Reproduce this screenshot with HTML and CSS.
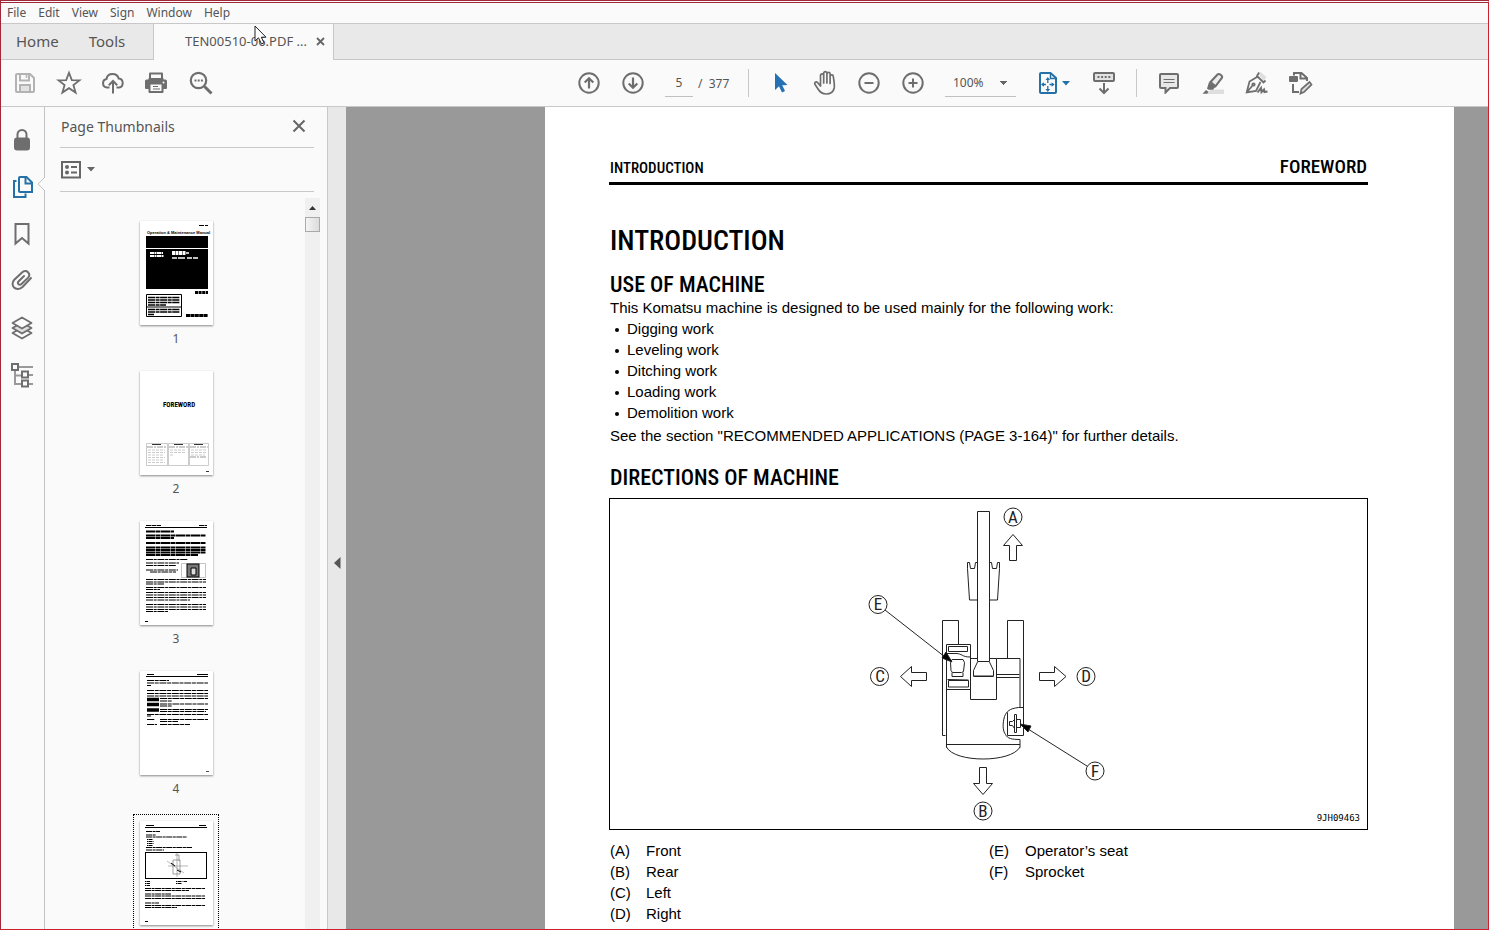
FILE: index.html
```html
<!DOCTYPE html>
<html lang="en">
<head>
<meta charset="utf-8">
<title>TEN00510-06.PDF</title>
<link rel="stylesheet" href="styles.css">
</head>
<body>
<div class="window">
  <nav class="menubar" aria-label="Menu">
    <button>File</button><button>Edit</button><button>View</button><button>Sign</button><button>Window</button><button>Help</button>
  </nav>

  <div class="tabs">
    <div class="tabs-fixed">
      <button class="tab tab-home">Home</button>
      <button class="tab">Tools</button>
    </div>
    <div class="tab-doc">
      <button class="tab-title">TEN00510-06.PDF ...</button>
      <button class="tab-close" aria-label="Close tab"><svg width="9" height="9" viewBox="0 0 9 9"><path d="M1 1l7 7M8 1L1 8" stroke="#666" stroke-width="1.800"/></svg></button>
    </div>
    <div class="tabs-rest"></div>
  </div>

  <div class="toolbar">
    <div class="tools tools-file">
      <button class="tool" aria-label="Save"><svg width="22" height="22" viewBox="0 0 22 22" fill="none" stroke="#b3b3b3" stroke-width="2"><path d="M2 3a1 1 0 0 1 1-1h13l4 4v13a1 1 0 0 1-1 1H3a1 1 0 0 1-1-1z"/><path d="M6 2v6.500h9V2M6 20v-7h10v7" /><path d="M12.500 3v3" stroke-width="1.500"/><path d="M7 14h8v5H7z" fill="#e2e2e2" stroke="none"/></svg></button>
      <button class="tool" aria-label="Star"><svg width="26" height="26" viewBox="0 0 26 26" fill="none" stroke="#6e6e6e" stroke-width="1.800"><path d="M13 2.800l2.800 7.300 7.700.300-6.100 4.700 2.200 7.500L13 18.200l-6.600 4.400 2.200-7.500-6.100-4.700 7.700-.300z"/></svg></button>
      <button class="tool" aria-label="Upload"><svg width="24" height="24" viewBox="0 0 24 24" fill="none" stroke="#6e6e6e" stroke-width="2"><path d="M8.500 16.500H6a4.300 4.300 0 0 1-.500-8.500C6 4.700 8.500 3 11.500 3c3.200 0 5.500 1.900 6.200 4.600A4.500 4.500 0 0 1 18 16.500h-2.500"/><path d="M12 22.500V10.500M7.800 14.200L12 10l4.200 4.200"/></svg></button>
      <button class="tool" aria-label="Print"><svg width="24" height="24" viewBox="0 0 24 24"><path d="M4 2.500A1 1 0 0 1 5 1.500h12a1 1 0 0 1 1 1V8H4z" fill="#6e6e6e"/><path d="M6 3.500h10V8H6z" fill="#fafafa"/><path d="M0 10a1.500 1.500 0 0 1 1.500-1.500h2V7h15v1.500h2A1.500 1.500 0 0 1 22 10v7a1 1 0 0 1-1 1h-2.500v3a1 1 0 0 1-1 1h-13a1 1 0 0 1-1-1v-3H1a1 1 0 0 1-1-1z" fill="#6e6e6e"/><path d="M5.500 13.500h11V20h-11z" fill="#fafafa"/><path d="M8 15.500h5M8 18h7" stroke="#6e6e6e" stroke-width="1.200"/><circle cx="18.500" cy="11.500" r="1" fill="#fafafa"/></svg></button>
      <button class="tool" aria-label="Find"><svg width="24" height="24" viewBox="0 0 24 24" fill="none" stroke="#6e6e6e"><circle cx="9.500" cy="9.500" r="7.700" stroke-width="2.200"/><path d="M15.500 15.500l7 7" stroke-width="3"/><path d="M5.500 9.500h2M8.700 9.500h2M11.900 9.500h2" stroke-width="2"/></svg></button>
    </div>
    <div class="tools tools-page">
      <button class="tool" aria-label="Previous page"><svg width="22" height="22" viewBox="0 0 22 22" fill="none" stroke="#6e6e6e" stroke-width="2"><circle cx="11" cy="11" r="9.700"/><path d="M11 16.500V6.500M6.700 10.500L11 6.200l4.300 4.300" stroke-width="2.200"/></svg></button>
      <button class="tool" aria-label="Next page"><svg width="22" height="22" viewBox="0 0 22 22" fill="none" stroke="#6e6e6e" stroke-width="2"><circle cx="11" cy="11" r="9.700"/><path d="M11 5.500v10M6.700 11.500l4.300 4.300 4.300-4.300" stroke-width="2.200"/></svg></button>
      <input class="page-number" type="text" value="5" aria-label="Page number">
      <span class="page-total">/&nbsp; 377</span>
      <span class="separator"></span>
      <button class="tool" aria-label="Select"><svg width="14" height="22" viewBox="0 0 14 22"><path d="M1 1v17l4-3.700L8 20.500l3-1.500-2.800-5.800L13.500 13z" fill="#2471b5"/></svg></button>
      <button class="tool" aria-label="Pan"><svg width="24" height="26" viewBox="0 0 24 26" fill="none" stroke="#6e6e6e" stroke-width="1.700" stroke-linecap="round" stroke-linejoin="round"><path d="M7.500 16V5.500a1.600 1.600 0 0 1 3.200 0V13 3.300a1.600 1.600 0 0 1 3.200 0V13 4a1.600 1.600 0 0 1 3.200 0v9.500V6.500a1.600 1.600 0 0 1 3.200 0c.500 4 1.500 8 .900 11.500-.800 4-4 6-8 6-4.200 0-6.500-2-8.500-5.500l-2.800-4.200c-.800-1.800 1-3 2.600-1.800z"/></svg></button>
      <button class="tool" aria-label="Zoom out"><svg width="22" height="22" viewBox="0 0 22 22" fill="none" stroke="#6e6e6e" stroke-width="2"><circle cx="11" cy="11" r="9.700"/><path d="M6.500 11h9"/></svg></button>
      <button class="tool" aria-label="Zoom in"><svg width="22" height="22" viewBox="0 0 22 22" fill="none" stroke="#6e6e6e" stroke-width="2"><circle cx="11" cy="11" r="9.700"/><path d="M6.500 11h9M11 6.500v9"/></svg></button>
      <select class="zoom-level" aria-label="Zoom level"><option>100%</option></select>
      <button class="tool tool-fit" aria-label="Fit page"><svg width="20" height="24" viewBox="0 0 20 24" fill="none" stroke="#2471a8" stroke-width="2"><path d="M2 3a1 1 0 0 1 1-1h9.500L18 7v14a1 1 0 0 1-1 1H3a1 1 0 0 1-1-1z"/><path d="M12.500 2v5.500H18" stroke-width="1.500"/><path d="M9.800 8v4M9.800 15v4M4 13.500h4M11.500 13.500h4" stroke-width="1.300"/><path d="M9.800 6l2.300 3h-4.600zM9.800 21l2.300-3h-4.600zM3 13.500l3-2.300v4.600zM16.600 13.500l-3-2.300v4.600z" fill="#2471a8" stroke="none"/></svg><svg width="8" height="5" viewBox="0 0 8 5"><path d="M0 0h8L4 4.500z" fill="#2471a8"/></svg></button>
      <button class="tool" aria-label="Scroll mode"><svg width="24" height="24" viewBox="0 0 24 24" fill="none" stroke="#6e6e6e" stroke-width="2"><rect x="2" y="2" width="20" height="8" rx="1" fill="#e2e2e2"/><path d="M5.500 6h13" stroke-dasharray="2 1.600"/><path d="M12 12v9.500M7.500 17.500L12 22l4.500-4.500"/></svg></button>
      <span class="separator"></span>
      <button class="tool" aria-label="Comment"><svg width="22" height="22" viewBox="0 0 22 22" fill="none" stroke="#6e6e6e" stroke-width="2"><path d="M3 2h16a1 1 0 0 1 1 1v12a1 1 0 0 1-1 1h-7l-4.500 4.500V16H3a1 1 0 0 1-1-1V3a1 1 0 0 1 1-1z" fill="#e8e8e8"/><path d="M5.500 7.500h11M5.500 10.500h11" stroke-width="1.200"/></svg></button>
      <button class="tool" aria-label="Highlight"><svg width="22" height="24" viewBox="0 0 22 24"><path d="M9 18.500h13V23H4z" fill="#dedede"/><path d="M8.500 11L15.500 3.500c1.500-1.500 5.500 1 4.500 3.200l-6.500 8.600z" fill="#ececec" stroke="#6e6e6e" stroke-width="2"/><path d="M7 11l6.500 4.500-2.500 3.200H6.700l-1.700-1zM4 19l2.500 1.800-1.300 2H.500z" fill="#6e6e6e"/></svg></button>
      <button class="tool" aria-label="Sign"><svg width="24" height="24" viewBox="0 0 24 24" fill="none" stroke="#6e6e6e" stroke-width="1.800"><path d="M13.500 3l2-2 6 5-3 4" fill="#dedede" stroke="none"/><path d="M14 1.500L12 5l6.500 6.500 2-2M12 6l-7.500 4.500-2.800 10.800L11 20l4.500-9M2 21l6-7"/><circle cx="8.500" cy="13.500" r="1.200"/><path d="M12.500 21.500l3.500-4.500.500 4 2.500-2.500.500 2.500 3-.500" stroke-width="2"/></svg></button>
      <button class="tool" aria-label="Edit document"><svg width="24" height="24" viewBox="0 0 24 24" fill="none" stroke="#6e6e6e" stroke-width="2"><rect x="0" y="5" width="9" height="6" rx="1" fill="#6e6e6e" stroke="none"/><path d="M5 4.500V2H12.500l5.500 5v3M11.500 2v5.500h6M4 13v8h6"/><path d="M11.500 22.500l1-4.500 8-7 2 2.600-7.500 7.400z" fill="#dedede" stroke-width="1.700"/></svg></button>
    </div>
  </div>

  <div class="workspace">
    <nav class="rail" aria-label="Side panels">
      <button class="rail-item" aria-label="Security"><svg width="22" height="24" viewBox="0 0 22 24"><path d="M6.500 11V6.500a4.500 4.500 0 0 1 9 0V11" fill="none" stroke="#6e6e6e" stroke-width="2"/><rect x="3" y="9.500" width="16" height="13" rx="3" fill="#6e6e6e"/></svg></button>
      <button class="rail-item rail-active" aria-label="Page thumbnails" aria-pressed="true"><svg width="22" height="24" viewBox="0 0 22 24" fill="none" stroke="#2471a8" stroke-width="2"><path d="M9 2h6.500L21 7.500V17H9a1 1 0 0 1-1-1V3a1 1 0 0 1 1-1z"/><path d="M14.500 2v6.500H21"/><path d="M5.500 6H3v16h11.500v-3.500"/></svg><svg class="notch" width="8" height="14" viewBox="0 0 8 14"><path d="M8 0L1 7l7 7" fill="#fafafa" stroke="#c4c4c4"/></svg></button>
      <button class="rail-item" aria-label="Bookmarks"><svg width="22" height="24" viewBox="0 0 22 24" fill="none" stroke="#6e6e6e" stroke-width="2"><path d="M4.500 2h13v19.500L11 16l-6.500 5.500z"/></svg></button>
      <button class="rail-item" aria-label="Attachments"><svg width="22" height="24" viewBox="0 0 22 24" fill="none" stroke="#6e6e6e" stroke-width="2" stroke-linecap="round"><path d="M20 9l-8.500 9c-2.500 2.500-6.500 2.500-8.500.500s-1.800-5.500.300-7.700L11 3.500c1.800-1.800 4.500-1.800 6-.300s1.600 3.800.100 5.400L10.500 15c-1 1-2.300.900-3 .200s-.700-2 .200-3L13 7"/></svg></button>
      <button class="rail-item" aria-label="Layers"><svg width="22" height="24" viewBox="0 0 22 24" stroke="#6e6e6e" stroke-width="1.800" stroke-linejoin="round"><path d="M1.500 17L11 11.500l9.500 5.500-9.500 5.500z" fill="#fafafa"/><path d="M1.500 12L11 6.500l9.500 5.500-9.500 5.500z" fill="#dedede"/><path d="M1.500 7L11 1.500 20.500 7 11 12.500z" fill="#fafafa"/></svg></button>
      <button class="rail-item" aria-label="Model tree"><svg width="24" height="26" viewBox="0 0 24 26" fill="none" stroke="#6e6e6e" stroke-width="2"><path d="M8 5h15M5 8v14h6M5 13.500h6M17 13h6M17 22h6" stroke="#999"/><path d="M2 2h6v6H2zM12 9.500h6v6h-6zM12 18.500h6v6h-6z" fill="#fafafa"/></svg></button>
    </nav>

    <aside class="panel">
      <header class="panel-head">
        <h2 class="panel-title">Page Thumbnails</h2>
        <button class="panel-close" aria-label="Close panel"><svg width="14" height="14" viewBox="0 0 14 14"><path d="M1.500 1.500l11 11M12.500 1.500l-11 11" stroke="#666" stroke-width="2"/></svg></button>
      </header>
      <div class="panel-options">
        <button class="options" aria-label="Options"><svg width="20" height="18" viewBox="0 0 20 18" fill="none" stroke="#666" stroke-width="2"><rect x="1" y="1" width="18" height="15.500"/><path d="M10 6h6M10 11.500h6"/><circle cx="6" cy="6" r="2" fill="#666" stroke="none"/><circle cx="6" cy="11.500" r="2" fill="#666" stroke="none"/></svg><svg width="8" height="5" viewBox="0 0 8 5"><path d="M0 0h8L4 4.500z" fill="#666"/></svg></button>
      </div>
      <div class="thumbs">
        <div class="thumb-list">
          <button class="thumb"><svg class="sheet" viewBox="0 0 73 104"><path d="M59 4.500h9" stroke="#000" stroke-dasharray="5 1"/><text x="7" y="13" class="cover-title">Operation &amp; Maintenance Manual</text><path d="M6 15h62v12H6zM6 28h62v40H6z"/><g stroke="#fff" fill="none"><path d="M10 32h13M10 35h14" stroke-width="2" stroke-dasharray="4 .5 2 .5"/><path d="M32 32h14" stroke-width="4" stroke-dasharray="3 .5"/><path d="M46 32h3M32 37h26" stroke-width="1.500" stroke-dasharray="5 1 7 2"/></g><g fill="none" stroke="#000"><path d="M55 71.500h13" stroke-width="3" stroke-dasharray="3 .6"/><path d="M46 94.500h22" stroke-width="3" stroke-dasharray="4 .4"/><path d="M6.500 73.500h35v22h-35zM7 86h34"/><path d="M8 76.500h32M8 79h32M8 81.500h32M8 84h18M8 88.500h32M8 91h32M8 93.500h6" stroke-width="1.500" stroke-dasharray="7 .6 4 .5"/></g></svg><span>1</span></button>
          <button class="thumb"><svg class="sheet" viewBox="0 0 73 104"><text x="23" y="36" class="sheet-title">FOREWORD</text><g fill="none" stroke="#aaa" stroke-width=".6"><path d="M6.500 72.500h21v22h-21zM28.500 72.500h20v22h-20zM49.500 72.500h19v22h-19z"/><path d="M8 79h17M8 81.500h17M8 84h16M8 86.500h17M8 89h16M8 91.500h17M30 79h16M30 81.500h16M30 84h4M51 79h16M51 81.500h16M51 84h14" stroke-dasharray="3 1"/><path d="M7 76h20M29 76h19M50 76h18M50 86h17" stroke="#555" stroke-dasharray="6 1 2 1"/><path d="M12 73.500h9M34 73.500h9M54 73.500h9M66 100.500h3" stroke="#333" stroke-width="1"/></g></svg><span>2</span></button>
          <button class="thumb"><svg class="sheet" viewBox="0 0 73 104"><g fill="none" stroke="#000"><path d="M6 4.500h15M59 4.500h8" stroke-dasharray="5 .5"/><path d="M5 6.500h62" stroke-width="1"/><path d="M6 10.500h28M6 14.500h60M6 17h28M6 22h60M6 26.500h60M6 29h60M6 31.500h60M6 34h52" stroke-width="1.800" stroke-dasharray="9 .5 5 .5"/><path d="M6 38.500h42M6 42h33M6 44.500h30M6 49h32M10 51h26M6 58.500h60M6 61h60M6 63h18M6 66.500h60M6 68.500h14M6 71.500h60M6 74h60M6 76.500h60M6 79h44M6 83.500h60M6 86h60M6 88.500h60M6 90.500h22M5 100.500h3" stroke-width="1.200" stroke-dasharray="7 .7 3 .7"/><path d="M41.500 42.500h24v14h-24z" stroke="#aaa" stroke-width=".7"/><rect x="47" y="43" width="12" height="13" fill="#777" stroke-width="1"/><path d="M51 54v-7h5v7z" fill="#ddd"/></g></svg><span>3</span></button>
          <button class="thumb"><svg class="sheet" viewBox="0 0 73 104"><g fill="none" stroke="#000"><path d="M7 3.500h7M57 3.500h11M6 5.500h62"/><path d="M7 9.500h22M7 12h61M7 14.500h4M7 19.500h61M7 22.500h61M7 25h61M20 27.500h48M20 30h12M20 33h48M20 35h12M20 38.500h48M20 40.500h46M7 43.500h61M7 45h4M7 48.500h8M20 48.500h48M20 50.500h18M7 53.500h10M20 53.500h30" stroke-width="1.200" stroke-dasharray="7 .7 4 .7"/><path d="M7 28.500h12M7 33.500h12M7 39h12" stroke-width="3.500"/><path d="M66 100.500h3" stroke-width=".7"/></g></svg><span>4</span></button>
          <button class="thumb thumb-current" aria-current="page" aria-label="Page 5"><svg class="sheet" viewBox="0 0 73 104"><g fill="none" stroke="#000"><path d="M6 4.500h8M59 4.500h7M5 6.500h62"/><path d="M6 10.500h14M6 14h10M6 16h41M6 26.500h46M6 29h18M5 67.500h60M5 69.500h44M5 73h26M5 75h60M5 77.500h60M5 82h14M5 84.500h60M5 86.500h32M5 100.500h3" stroke-width="1.100" stroke-dasharray="6 .6 3 .5"/><path d="M7 18.500h6M7 20.500h7M7 22.500h7M7 24.500h6M5 60.500h5M5 62.500h5M5 64.500h5M36 60.500h11M36 62.500h6" stroke-dasharray="1 .5 4 1"/><rect x="5.500" y="31.500" width="61" height="26"/><path d="M37 32v24M28 45h20M27 40l17 12" stroke="#999" stroke-width=".7"/><path d="M33 39h7v14h-7zM35 34h4v6" stroke="#777" stroke-width=".7"/><path d="M31 42l4 3M37 49l4 2" stroke-width="1"/></g></svg></button>
        </div>
        <div class="scrollbar">
          <button class="scroll-up" aria-label="Scroll up"><svg width="7" height="4" viewBox="0 0 7 4"><path d="M0 4L3.500 0 7 4z" fill="#333"/></svg></button>
          <div class="scroll-thumb"></div>
        </div>
      </div>
    </aside>

    <div class="splitter"><button class="collapse" aria-label="Collapse panel"><svg width="7" height="12" viewBox="0 0 7 12"><path d="M6.500 0v12L0 6z" fill="#555"/></svg></button></div>

    <main class="canvas">
      <article class="page">
        <header class="page-head"><span>INTRODUCTION</span><strong>FOREWORD</strong></header>
        <h1>INTRODUCTION</h1>
        <h2>USE OF MACHINE</h2>
        <p>This Komatsu machine is designed to be used mainly for the following work:</p>
        <ul class="uses">
          <li>Digging work</li><li>Leveling work</li><li>Ditching work</li><li>Loading work</li><li>Demolition work</li>
        </ul>
        <p>See the section "RECOMMENDED APPLICATIONS (PAGE 3-164)" for further details.</p>
        <h2 class="directions">DIRECTIONS OF MACHINE</h2>
        <figure>
          <svg width="280" height="330" viewBox="849 498 280 330" fill="none" stroke="#222" stroke-width="1">
            <path d="M942.500 734.500v-115h16v24M945.500 734.500h-3M1007.500 657v-37.500h16v87M946.500 643.500h24v55h26v-41h23.500v49M946.500 643.500v103M970.500 657.500h7M989.500 657.500h7M996.500 673.500h23M996.500 676.500h23"/>
            <path d="M977.500 660.500v-150h12v150zM977.500 661l-4 8.500v5.500h20v-5.500l-4-8.500M973.500 675.500h20"/>
            <path d="M977.500 561.500h-2l-1 6h-4l-1-6h-2v6l2 31.500h8M989.500 561.500h2l1 6h4l1-6h2v6l-2 31.500h-8"/>
            <path d="M948.500 645.500h19v5h-19zM945 652.500h11c6 0 6 3.500 14 3.500M952 658.500h11l1.500 3-1 9-2 1h-9l-1.500-2-.500-8zM952 671.500v4h11v-4M947.500 678.500l21 .500M948.500 686v-6.500h20V686zM947 688.500h23"/>
            <path d="M1023.500 706.500h-5c-9 1-12 4-14 9-2 7-2 14 1 18 2 4 6 5 14.500 5v8M1023.500 706v28.500h-16v-23"/>
            <path d="M1014.500 713.500h2v18h-2zM1014.500 718.500l-2 2h-3v4h3l2 3M1016.500 718.500h4v8h-4"/>
            <path d="M946.500 743.500h73.500M946.500 746c8 16 65 16 73.500 0"/>
            <path d="M1009.500 559.500v-15h-6l9.500-11 9.500 11h-6v15zM1039.500 671.500h15v-6l11.500 10-11.500 10v-6h-15zM926.500 671.500h-15v-6l-11 10 11 10v-6h15zM979.500 766.500v16h-6l9.500 11 9.500-11h-6v-16z"/>
            <path d="M885 609l60 47M1087 765l-59-37"/>
            <path d="M952 661l-10-4 4-6zM1020 723l8 8 3-6z" fill="#000"/>
            <circle cx="1013" cy="516" r="9"/><circle cx="878" cy="603.500" r="9"/><circle cx="879.500" cy="675.500" r="9"/><circle cx="1086" cy="675.500" r="9"/><circle cx="983" cy="810" r="9"/><circle cx="1095" cy="770" r="9"/>
            <g class="marks"><text x="1013" y="522">A</text><text x="878" y="609">E</text><text x="880" y="681">C</text><text x="1086" y="681">D</text><text x="983" y="816">B</text><text x="1095" y="776">F</text></g>
          </svg>
          <figcaption>9JH09463</figcaption>
        </figure>
        <div class="legend">
          <dl><dt>(A)</dt><dd>Front</dd><dt>(B)</dt><dd>Rear</dd><dt>(C)</dt><dd>Left</dd><dt>(D)</dt><dd>Right</dd></dl>
          <dl><dt>(E)</dt><dd>Operator’s seat</dd><dt>(F)</dt><dd>Sprocket</dd></dl>
        </div>
      </article>
    </main>
  </div>
  <svg class="pointer" width="14" height="20" viewBox="0 0 14 20"><path d="M1 1v15l3.500-3.200L7.500 19l2.500-1.200-2.700-5.600H12z" fill="#fff" stroke="#222"/></svg>
</div>
</body>
</html>
```
FILE: styles.css
```css
* { box-sizing: border-box; }
body { margin: 0; font-family: "Noto Sans", "Open Sans", sans-serif; color: #555; }
button { border: 0; padding: 0; background: none; font: inherit; color: inherit; display: flex; align-items: center; justify-content: center; }
svg { display: block; flex: none; }

.window { position: relative; display: flex; flex-direction: column; height: 100vh; overflow: hidden; border: 1px solid #d02030; border-left-color: #a02838; border-top: 3px double #a02838; background: #fafafa; }

.menubar { display: flex; gap: 12px; height: 20px; padding: 0 0 2px 6px; font-size: 12px; flex: none; }

.tabs { display: flex; height: 37px; flex: none; border-top: 1px solid #c8c8c8; font-size: 15px; }
.tabs-fixed { display: flex; gap: 30px; width: 153px; padding: 0 0 2px 15px; background: #e9e9e9; border-right: 1px solid #c8c8c8; border-bottom: 1px solid #c8c8c8; }
.tab-doc { display: flex; align-items: center; justify-content: flex-end; gap: 9px; width: 180px; padding: 0 8px 2px 0; border-right: 1px solid #c8c8c8; font-size: 13px; }
.tabs-rest { flex: 1; background: #e9e9e9; border-bottom: 1px solid #c8c8c8; }

.toolbar { display: flex; height: 47px; flex: none; border-bottom: 1px solid #c8c8c8; }
.tools { display: flex; align-items: center; }
.tools-file { padding-left: 2px; }
.tools-page { margin-left: 344px; font-size: 12px; }
.tool { width: 44px; height: 44px; flex: none; }
.tool-fit { gap: 4px; margin: 0 6px 0 16px; }
.page-number { width: 28px; height: 28px; margin-left: 10px; padding: 0; border: 0; border-bottom: 1px solid #c0c0c0; background: none; text-align: center; font: inherit; color: inherit; }
.page-total { width: 48px; padding-left: 5px; white-space: nowrap; }
.separator { width: 1px; height: 28px; margin: 0 10px; background: #c8c8c8; }
.page-total + .separator { margin-left: 7px; }
.zoom-level { appearance: none; width: 71px; height: 28px; margin-left: 10px; padding: 0 0 0 8px; border: 0; border-bottom: 1px solid #c0c0c0; border-radius: 0; font: inherit; color: inherit; background: linear-gradient(to bottom right, #666 50%, transparent 50%) 59px 12px / 4px 4px no-repeat, linear-gradient(to bottom left, #666 50%, transparent 50%) 55px 12px / 4px 4px no-repeat; }

.workspace { display: flex; flex: 1; min-height: 0; }
.rail { width: 44px; flex: none; padding-top: 9px; border-right: 1px solid #c4c4c4; }
.rail-item { position: relative; width: 42px; height: 47px; }
.notch { position: absolute; right: -2px; top: 14px; }

.panel { display: flex; flex-direction: column; width: 283px; flex: none; border-right: 1px solid #c8c8c8; }
.panel-head { display: flex; align-items: center; justify-content: space-between; height: 41px; flex: none; margin: 0 13px 0 15px; padding: 0 8px 2px 1px; border-bottom: 1px solid #c8c8c8; }
.panel-title { margin: 0; font-size: 14px; font-weight: 400; }
.panel-options { display: flex; height: 44px; flex: none; margin: 0 13px 0 15px; padding-left: 1px; border-bottom: 1px solid #c8c8c8; }
.options { gap: 6px; }
.thumbs { display: flex; flex: 1; min-height: 0; padding: 6px 7px 0 0; }
.thumb-list { flex: 1; display: flex; flex-direction: column; align-items: center; padding: 16px 0 0 2px; overflow: hidden; }
.thumb { flex: none; flex-direction: column; justify-content: flex-start; gap: 3px; width: 86px; height: 150px; padding-top: 6px; border: 1px dotted transparent; font-size: 12px; line-height: 22px; }
.thumb-current { border-color: #000; }
.sheet { width: 73px; height: 104px; background: #fff; box-shadow: 0 1px 2px #888; }
.cover-title { font: bold 4px "Liberation Sans", sans-serif; }
.sheet-title { font: bold 7px "Roboto Condensed", "Liberation Sans", sans-serif; }
.scrollbar { width: 15px; background: #f0f0f0; }
.scroll-up { width: 15px; height: 19px; }
.scroll-thumb { height: 15px; border: 1px solid #aaa; background: linear-gradient(to right, #f4f4f4, #dcdcdc); }

.splitter { display: flex; align-items: flex-start; justify-content: center; width: 18px; flex: none; padding-top: 450px; background: #e8e8e8; }

.canvas { display: flex; align-items: flex-start; flex: 1; min-width: 0; padding: 0 34px 0 199px; background: #999; overflow: hidden; }
.page { flex: 1; min-width: 0; min-height: 900px; padding: 47px 86px 40px 64px; background: #fff; color: #000; font: 15px/21px "Liberation Sans", Arial, sans-serif; }
.page-head, .page h1, .page h2 { font-family: "Roboto Condensed", "Liberation Sans Narrow", "Liberation Sans", sans-serif; font-weight: 500; }
.page-head { display: flex; align-items: baseline; justify-content: space-between; padding: 2px 1px 3px; border-bottom: 3px solid #000; font-size: 15px; }
.page-head strong { font-size: 19px; font-weight: 500; }
.page h1, .page h2 { margin: 0 1px; }
.page h1 { margin-top: 40px; font-size: 28px; line-height: 32px; }
.page h2 { margin-top: 16px; font-size: 22px; line-height: 24px; }
.page .directions { margin-top: 20px; }
.page p { margin: 0 1px; }
.uses { margin: 0 0 2px; padding-left: 18px; list-style: none; }
.uses li { display: flex; align-items: center; }
.uses li::before { content: ""; width: 4px; height: 4px; margin: 2px 8px 0 -12px; border-radius: 50%; background: #000; }
.page figure { position: relative; display: flex; justify-content: center; margin: 8px 0 10px; border: 1px solid #000; }
.page figcaption { position: absolute; right: 7px; bottom: 4px; font: 9px/14px "DejaVu Sans Mono", monospace; }
.marks { font: 17px "Roboto Condensed", "Liberation Sans", sans-serif; text-anchor: middle; fill: #222; stroke: none; }
.legend { display: grid; grid-template-columns: 1fr 1fr; padding-left: 1px; }
.legend dl { display: grid; grid-template-columns: 36px 1fr; align-content: start; margin: 0; }
.legend dd { margin: 0; }

.pointer { position: absolute; left: 253px; top: 22px; }
```
